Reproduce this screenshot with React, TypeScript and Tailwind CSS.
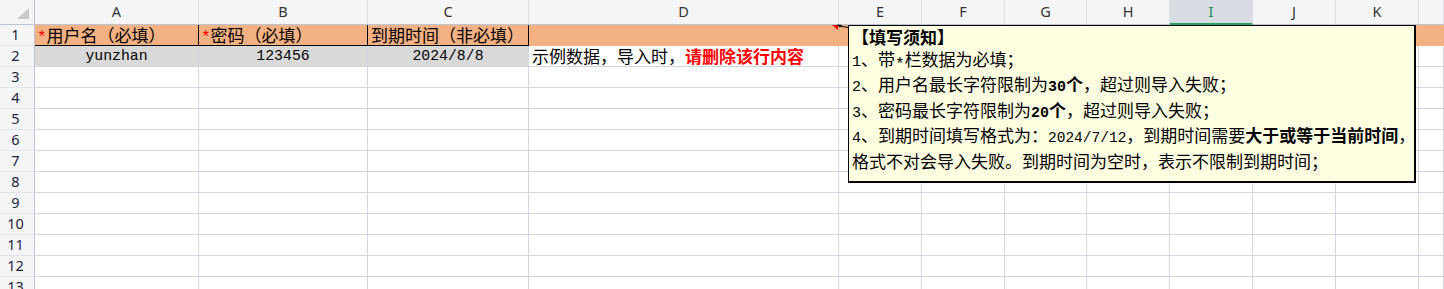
import React from 'react';

const CJK = '[font-family:"Noto_Sans_CJK_SC",sans-serif]';

const columns = ['A', 'B', 'C', 'D', 'E', 'F', 'G', 'H', 'I', 'J', 'K', 'L'];
const rowCount = 13;

function Latin({ children, size = 'text-[14.5px]' }: { children: React.ReactNode; size?: string }) {
    return <span className={`[font-family:"Liberation_Mono",monospace] ${size}`}>{children}</span>;
}

function Star({ color = 'text-[#ff0000]' }: { color?: string }) {
    return (
        <span className={`inline-block translate-y-[3px] ${color} [font-family:'Liberation_Mono',monospace] text-[16px] leading-none`}>
            *
        </span>
    );
}

function Cell({ className = '', children }: { className?: string; children?: React.ReactNode }) {
    return (
        <div className={`flex items-center whitespace-nowrap border-r border-b ${className}`}>
            {children}
        </div>
    );
}

export default function App() {
    const grid = 'border-[#d2d6e0]';
    const orange = 'bg-[#f4b183]';

    return (
        <div className={`relative w-[1444px] h-[289px] overflow-hidden bg-white ${CJK} text-[17px] text-black`}>
            <div className="grid grid-cols-[35px_164px_169px_161px_310px_83px_83px_82px_83px_83px_83px_83px_1fr] auto-rows-[21px] grid-rows-[25px]">
                {/* column headers */}
                <div className="flex items-end justify-end border-r border-b border-[#bcc3d1] bg-[#f4f5f7] pr-[5px] pb-[5px]">
                    <svg width="12" height="11" viewBox="0 0 12 11">
                        <polygon points="12,0 12,11 0,11" fill="#c6c8cc" />
                    </svg>
                </div>
                {columns.map(c => (
                    <div
                        key={c}
                        className={`flex items-center justify-center border-r border-b [font-family:'Noto_Sans',sans-serif] text-[14.5px] ${
                            c === 'I'
                                ? 'bg-[#d9dce2] border-r-[#d9dce2] border-b-2 border-b-[#1fa463] text-[#178a52]'
                                : 'bg-[#f4f5f7] border-r-[#dcdfe6] border-b-[#bcc3d1] text-[#333]'
                        }`}
                    >
                        {c === 'L' ? '' : c}
                    </div>
                ))}

                {Array.from({ length: rowCount }, (_, i) => i + 1).map(r => (
                    <React.Fragment key={r}>
                        <div className="flex items-center justify-center pr-[3px] border-r border-r-[#bcc3d1] border-b border-b-[#e1e4ea] bg-[#f4f5f7] [font-family:'Noto_Sans',sans-serif] text-[14.5px] text-[#1d2340]">
                            {r}
                        </div>
                        {r === 1 && (
                            <>
                                <Cell className={`${orange} border-black pl-[2px]`}>
                                    <Star />
                                    <span>用户名（必填）</span>
                                </Cell>
                                <Cell className={`${orange} border-black pl-[2px]`}>
                                    <Star />
                                    <span>密码（必填）</span>
                                </Cell>
                                <Cell className={`${orange} border-black pl-[3px]`}>到期时间（非必填）</Cell>
                                {columns.slice(3).map(c => (
                                    <Cell key={c} className={`${orange} border-[#f4b183]`} />
                                ))}
                            </>
                        )}
                        {r === 2 && (
                            <>
                                <Cell className={`bg-[#d9d9d9] ${grid} justify-center`}>
                                    <Latin size="text-[14.8px]">yunzhan</Latin>
                                </Cell>
                                <Cell className={`bg-[#d9d9d9] ${grid} justify-center`}>
                                    <Latin size="text-[14.8px]">123456</Latin>
                                </Cell>
                                <Cell className={`bg-[#d9d9d9] ${grid} justify-center`}>
                                    <Latin size="text-[14.8px]">2024/8/8</Latin>
                                </Cell>
                                <Cell className={`${grid} pl-[3px]`}>
                                    <span>示例数据，导入时，</span>
                                    <span className="font-bold text-[#ff0000]">请删除该行内容</span>
                                </Cell>
                                {columns.slice(4).map(c => (
                                    <Cell key={c} className={grid} />
                                ))}
                            </>
                        )}
                        {r > 2 && columns.map(c => <Cell key={c} className={grid} />)}
                    </React.Fragment>
                ))}
            </div>

            {/* comment indicator + connector */}
            <svg className="absolute left-[829px] top-[24px]" width="22" height="10" viewBox="0 0 22 10">
                <polygon points="3,1 9,1 9,6" fill="#ff0000" />
                <line x1="9" y1="1.5" x2="19" y2="3.5" stroke="#000" strokeWidth="1.2" />
                <polygon points="8,0.5 13,1 11,3.5" fill="#000" />
            </svg>

            {/* comment box */}
            <div className="absolute left-[848px] top-[25px] w-[568px] h-[158px] border border-black border-r-2 border-b-2 bg-[#ffffe1] pl-[3px] text-[17px] leading-[21.6px] whitespace-nowrap">
                <div className="font-bold">【填写须知】</div>
                <div>
                    <Latin size="text-[15px]">1</Latin>、带<Star color="text-black" />栏数据为必填；
                </div>
                <div>
                    <Latin size="text-[15px]">2</Latin>、用户名最长字符限制为
                    <span className="font-bold">
                        <Latin size="text-[15px]">30</Latin>个
                    </span>
                    ，超过则导入失败；
                </div>
                <div>
                    <Latin size="text-[15px]">3</Latin>、密码最长字符限制为
                    <span className="font-bold">
                        <Latin size="text-[15px]">20</Latin>个
                    </span>
                    ，超过则导入失败；
                </div>
                <div>
                    <Latin size="text-[15px]">4</Latin>、到期时间填写格式为：<Latin>2024/7/12</Latin>，到期时间需要
                    <span className="font-bold">大于或等于当前时间</span>，
                </div>
                <div>格式不对会导入失败。到期时间为空时，表示不限制到期时间；</div>
            </div>
        </div>
    );
}
